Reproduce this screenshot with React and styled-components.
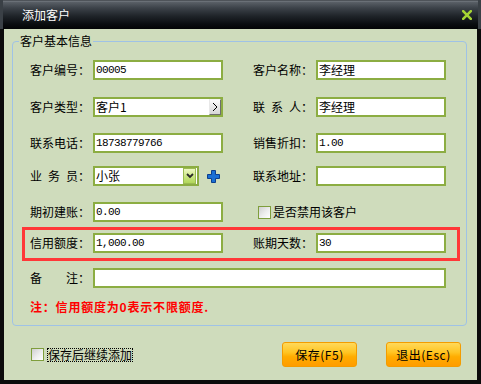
import React from 'react';
import styled, { createGlobalStyle } from 'styled-components';

const Global = createGlobalStyle`
  html, body { margin: 0; padding: 0; background: #000; }
  body { font-family: "Noto Sans CJK SC", "Liberation Sans", sans-serif; font-size: 12px; }
  * { box-sizing: border-box; }
`;

const Window = styled.div`
  width: 481px;
  height: 384px;
  background: #0b0b0b;
  display: flex;
  flex-direction: column;
  overflow: hidden;
`;

const TitleBar = styled.div`
  height: 29px;
  flex: none;
  display: flex;
  align-items: center;
  justify-content: space-between;
  padding: 0 9px 0 22px;
  background: linear-gradient(to bottom, #22262b 0px, #7a8087 1px, #5a6067 2px, #3c4249 8px, #1f2429 16px, #0a0d10 24px, #030405 29px);
  box-shadow: inset 3px 0 0 #3a4046, inset -3px 0 0 #3a4046;
  color: #fff;
  font-size: 12px;
  line-height: 14px;
`;

const Body = styled.div`
  flex: 1;
  margin: 0 4px 4px 4px;
  background: #cfdcbc;
  padding: 5px 10px 0 8px;
  display: flex;
  flex-direction: column;
`;

const Group = styled.fieldset`
  margin: 0;
  padding: 0 0 10px 0;
  border: 1px solid #9fc2e6;
  border-radius: 4px;
  min-width: 0;
`;

const Legend = styled.legend`
  margin-left: 6px;
  padding: 0 1px;
  font-size: 12px;
  line-height: 14px;
  color: #000;
`;

const Rows = styled.div`
  display: flex;
  flex-direction: column;
  align-items: flex-start;
  padding-left: 17px;
`;

const Row = styled.div`
  display: grid;
  grid-template-columns: 63px 130px 30px 63px 130px;
  grid-auto-rows: 20px;
  align-items: center;
  margin-top: ${p => p.$mt || 0}px;
`;

const HighlightRow = styled(Row)`
  box-sizing: content-box;
  border: 3px solid #ff3838;
  padding: 3px 11px 5px 5px;
  margin-left: -8px;
`;

const Label = styled.span`
  grid-column: ${p => (p.$right ? 4 : 1)};
  white-space: nowrap;
  line-height: 14px;
  color: #000;
  font-size: 12px;
`;

const Field = styled.div`
  height: 20px;
  display: flex;
  align-items: center;
  background: #fff;
  border: 2px solid #8cad42;
  padding-left: 1px;
  overflow: hidden;
  white-space: nowrap;
  color: #000;
  font-family: ${p => (p.$mono ? '"Liberation Mono", monospace' : '"Noto Sans CJK SC", sans-serif')};
  font-size: ${p => (p.$mono ? '11px' : '12px')};
  letter-spacing: ${p => (p.$mono ? '-0.6px' : '0')};
  grid-column: ${p => p.$span || 'auto'};
  width: ${p => (p.$w ? `${p.$w}px` : 'auto')};
`;

const FieldText = styled.span`
  flex: 1;
  line-height: 14px;
`;

const PickBtn = styled.span`
  width: 12px;
  height: 16px;
  flex: none;
  display: flex;
  align-items: center;
  justify-content: center;
  background: linear-gradient(to bottom, #fbfbfb, #d6d6d6);
  border-top: 1px solid #f4f4f4;
  border-left: 1px solid #e8e8e8;
  border-right: 1px solid #6e6e6e;
  border-bottom: 1px solid #6e6e6e;
`;

const DropBtn = styled.span`
  width: 13px;
  height: 16px;
  flex: none;
  margin-right: 1px;
  display: flex;
  align-items: center;
  justify-content: center;
  background: linear-gradient(to bottom, #eef8c4, #c6e47c 60%, #b2d65a);
  border: 1px solid #9abb52;
`;

const SelectCell = styled.div`
  display: flex;
  align-items: center;
`;

const AddIcon = styled.svg`
  margin-left: 8px;
  flex: none;
`;

const CheckCell = styled.label`
  grid-column: 4 / 6;
  display: flex;
  align-items: center;
  padding-left: 5px;
  font-size: 12px;
  line-height: 14px;
  color: #000;
`;

const Check = styled.span`
  width: 13px;
  height: 13px;
  flex: none;
  border: 1px solid #7f9e3c;
  background: linear-gradient(135deg, #cfcfcf 0%, #eeeeee 55%, #ffffff 100%);
  margin-right: 2px;
`;

const Note = styled.div`
  margin-top: 11px;
  color: #ff0000;
  font-weight: bold;
  font-size: 12px;
  line-height: 16px;
  letter-spacing: 0.8px;
`;

const Footer = styled.div`
  display: flex;
  align-items: center;
  margin-top: 16px;
  height: 25px;
  padding: 0 6px 0 19px;
`;

const FocusText = styled.span`
  margin-left: 1px;
  border: 1px dotted #000;
  line-height: 12px;
  font-size: 12px;
  color: #000;
`;

const Spacer = styled.div`
  flex: 1;
`;

const Btn = styled.button`
  width: 75px;
  height: 25px;
  border: 1px solid #f39c00;
  border-radius: 3px;
  background: linear-gradient(to bottom, #ffd95a 0%, #ffc524 40%, #ffac00 60%, #ff9c00 100%);
  font-family: "Noto Sans CJK SC", sans-serif;
  font-size: 12px;
  letter-spacing: 0.5px;
  color: #000;
  padding: 0;
  cursor: default;
  & + & { margin-left: 29px; }
`;

export default function App() {
  return (
    <>
      <Global />
      <Window>
        <TitleBar>
          <span>添加客户</span>
          <svg width="10" height="10" viewBox="0 0 10 10">
            <path d="M1.2 1.2L8.8 8.8M8.8 1.2L1.2 8.8" stroke="#a6d534" strokeWidth="2.6" strokeLinecap="square" />
          </svg>
        </TitleBar>
        <Body>
          <Group>
            <Legend>客户基本信息</Legend>
            <Rows>
              <Row $mt={12}>
                <Label>客户编号：</Label>
                <Field $mono><FieldText>00005</FieldText></Field>
                <Label $right>客户名称：</Label>
                <Field><FieldText>李经理</FieldText></Field>
              </Row>
              <Row $mt={17}>
                <Label>客户类型：</Label>
                <Field>
                  <FieldText>客户1</FieldText>
                  <PickBtn>
                    <svg width="6" height="10" viewBox="0 0 6 10">
                      <path d="M1 1L5 5L1 9" stroke="#000" strokeWidth="1" fill="none" />
                    </svg>
                  </PickBtn>
                </Field>
                <Label $right>联&#x2002;系&#x2002;人：</Label>
                <Field><FieldText>李经理</FieldText></Field>
              </Row>
              <Row $mt={16}>
                <Label>联系电话：</Label>
                <Field $mono><FieldText>18738779766</FieldText></Field>
                <Label $right>销售折扣：</Label>
                <Field $mono><FieldText>1.00</FieldText></Field>
              </Row>
              <Row $mt={13}>
                <Label>业&#x2002;务&#x2002;员：</Label>
                <SelectCell>
                  <Field $w={106}>
                    <FieldText>小张</FieldText>
                    <DropBtn>
                      <svg width="8" height="6" viewBox="0 0 8 6">
                        <path d="M1 1L4 4L7 1" stroke="#2a2a2a" strokeWidth="1.8" fill="none" />
                      </svg>
                    </DropBtn>
                  </Field>
                  <AddIcon width="13" height="13" viewBox="0 0 13 13">
                    <path d="M4.5 0.5h4v4h4v4h-4v4h-4v-4h-4v-4h4z" fill="#1a6fd4" stroke="#0b3f8f" strokeWidth="1" />
                  </AddIcon>
                </SelectCell>
                <Label $right>联系地址：</Label>
                <Field />
              </Row>
              <Row $mt={16}>
                <Label>期初建账：</Label>
                <Field $mono><FieldText>0.00</FieldText></Field>
                <CheckCell>
                  <Check />
                  是否禁用该客户
                </CheckCell>
              </Row>
              <HighlightRow $mt={5}>
                <Label>信用额度：</Label>
                <Field $mono><FieldText>1,000.00</FieldText></Field>
                <Label $right>账期天数：</Label>
                <Field $mono><FieldText>30</FieldText></Field>
              </HighlightRow>
              <Row $mt={7}>
                <Label>备&#x2003;&#x2003;注：</Label>
                <Field $span="2 / 6" />
              </Row>
              <Note>注：信用额度为0表示不限额度.</Note>
            </Rows>
          </Group>
          <Footer>
            <Check />
            <FocusText>保存后继续添加</FocusText>
            <Spacer />
            <Btn>保存(F5)</Btn>
            <Btn>退出(Esc)</Btn>
          </Footer>
        </Body>
      </Window>
    </>
  );
}
